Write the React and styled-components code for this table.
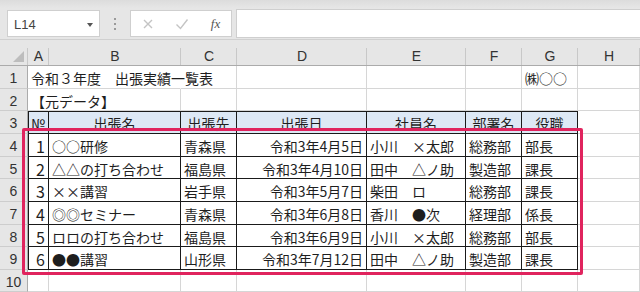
import React from 'react';
import styled, { createGlobalStyle } from 'styled-components';

const GlobalStyle = createGlobalStyle`
  html, body {
    margin: 0;
    padding: 0;
    background: #fff;
  }
  body {
    font-family: "Noto Sans CJK JP", "Noto Sans", sans-serif;
    overflow: hidden;
  }
`;

const COLS = [28, 21, 132, 56, 130, 99, 56, 56, 62];
const ROW_HEIGHTS = [23, 22, 23, 23, 22, 23, 23, 22, 23, 22];
const GRID = '#d6d6d6';
const LINE = '#1a1a1a';

const Window = styled.div`
  width: 640px;
  height: 292px;
  overflow: hidden;
  background: #fff;
`;

const Toolbar = styled.div`
  display: flex;
  align-items: center;
  height: 40px;
  padding: 10px 0 2px 7px;
  box-sizing: border-box;
  background: linear-gradient(#dcdcdc, #e6e6e6 8px, #e6e6e6);
  border-bottom: 1px solid #d0d0d0;
`;

const NameBox = styled.div`
  display: flex;
  align-items: center;
  justify-content: space-between;
  width: 93px;
  height: 27px;
  box-sizing: border-box;
  padding: 2px 6px 0 6px;
  background: #fff;
  border: 1px solid #cfcfcf;
  font-family: "Liberation Sans", sans-serif;
  font-size: 13px;
  color: #444;
`;

const Caret = styled.span`
  width: 0;
  height: 0;
  border-left: 3px solid transparent;
  border-right: 3px solid transparent;
  border-top: 4px solid #555;
`;

const Grip = styled.div`
  width: 30px;
  display: flex;
  flex-direction: column;
  align-items: center;
  gap: 3px;

  span {
    width: 2px;
    height: 2px;
    background: #9a9a9a;
  }
`;

const FuncBox = styled.div`
  display: flex;
  align-items: center;
  justify-content: space-around;
  width: 102px;
  height: 27px;
  box-sizing: border-box;
  background: #fff;
  border: 1px solid #cfcfcf;
  color: #c4c4c4;
`;

const Fx = styled.span`
  font-family: "Liberation Serif", serif;
  font-style: italic;
  font-size: 13px;
  color: #555;
`;

const FormulaInput = styled.div`
  flex: 1;
  height: 27px;
  margin-left: 4px;
  background: #fff;
  border: 1px solid #cfcfcf;
  border-right: none;
`;

const Sheet = styled.div`
  position: relative;
  display: grid;
  grid-template-columns: ${COLS.map(c => `${c}px`).join(' ')};
  grid-template-rows: 26px ${ROW_HEIGHTS.map(h => `${h}px`).join(' ')};
`;

const ColHead = styled.div`
  position: relative;
  background: #e6e6e6;
  border-bottom: 1px solid #ababab;
  display: flex;
  align-items: flex-end;
  justify-content: center;
  padding-bottom: 1px;
  font-family: "Liberation Sans", sans-serif;
  font-size: 14px;
  color: #333;

  &::after {
    content: '';
    position: absolute;
    right: 0;
    top: 8px;
    bottom: 0;
    width: 1px;
    background: #c8c8c8;
  }
`;

const Corner = styled(ColHead)`
  &::before {
    content: '';
    position: absolute;
    right: 4px;
    bottom: 3px;
    width: 0;
    height: 0;
    border-left: 11px solid transparent;
    border-bottom: 11px solid #bdbdbd;
  }
`;

const RowHead = styled.div`
  background: #e6e6e6;
  border-right: 1px solid #ababab;
  border-bottom: 1px solid #cdcdcd;
  display: flex;
  align-items: center;
  justify-content: center;
  padding-top: 2px;
  font-family: "Liberation Sans", sans-serif;
  font-size: 14px;
  color: #333;
  box-sizing: border-box;
`;

const shadows = p => {
  const list = [];
  if (p.$left) list.push(`inset 1px 0 0 ${LINE}`);
  if (p.$top) list.push(`inset 0 1px 0 ${LINE}`);
  return list.length ? list.join(', ') : 'none';
};

const Cell = styled.div`
  box-sizing: border-box;
  display: flex;
  align-items: center;
  justify-content: ${p => (p.$align === 'right' ? 'flex-end' : p.$align === 'center' ? 'center' : 'flex-start')};
  padding: 2px 3px 0;
  overflow: visible;
  white-space: pre;
  font-size: 14px;
  color: #1e1e1e;
  background: ${p => (p.$fill ? '#dde8f5' : '#fff')};
  border-right: 1px solid ${p => (p.$boxed ? LINE : p.$hideRight ? 'transparent' : GRID)};
  border-bottom: 1px solid ${p => (p.$boxed ? LINE : GRID)};
  box-shadow: ${shadows};
  position: relative;
  z-index: ${p => (p.$spill ? 1 : 0)};
`;

const Num = styled.span`
  font-size: 16px;
  line-height: 1;
`;

const Highlight = styled.div`
  position: absolute;
  left: 22px;
  top: 88px;
  width: 561px;
  height: 147px;
  box-sizing: border-box;
  border: 3px solid #e0245e;
  border-radius: 2px;
  pointer-events: none;
  z-index: 2;
`;

const letters = ['A', 'B', 'C', 'D', 'E', 'F', 'G', 'H'];

const records = [
  ['1', '○○研修', '青森県', '令和3年4月5日', '小川　×太郎', '総務部', '部長'],
  ['2', '△△の打ち合わせ', '福島県', '令和3年4月10日', '田中　△ノ助', '製造部', '課長'],
  ['3', '××講習', '岩手県', '令和3年5月7日', '柴田　ロ', '総務部', '課長'],
  ['4', '◎◎セミナー', '青森県', '令和3年6月8日', '香川　●次', '経理部', '係長'],
  ['5', 'ロロの打ち合わせ', '福島県', '令和3年6月9日', '小川　×太郎', '総務部', '部長'],
  ['6', '●●講習', '山形県', '令和3年7月12日', '田中　△ノ助', '製造部', '課長'],
];

const header = ['№', '出張名', '出張先', '出張日', '社員名', '部署名', '役職'];

function Row({ n, children }) {
  return (
    <>
      <RowHead>{n}</RowHead>
      {children}
    </>
  );
}

export default function App() {
  return (
    <Window>
      <GlobalStyle />
      <Toolbar>
        <NameBox>
          L14
          <Caret />
        </NameBox>
        <Grip>
          <span />
          <span />
          <span />
        </Grip>
        <FuncBox>
          <svg width="12" height="12" viewBox="0 0 12 12">
            <path d="M2 2l8 8M10 2l-8 8" stroke="currentColor" strokeWidth="1.4" fill="none" />
          </svg>
          <svg width="14" height="12" viewBox="0 0 14 12">
            <path d="M1.5 6.5l4 4 7-9" stroke="currentColor" strokeWidth="1.4" fill="none" />
          </svg>
          <Fx>fx</Fx>
        </FuncBox>
        <FormulaInput />
      </Toolbar>

      <Sheet>
        <Corner />
        {letters.map(l => (
          <ColHead key={l}>{l}</ColHead>
        ))}

        <Row n="1">
          <Cell $hideRight $spill>令和３年度　出張実績一覧表</Cell>
          <Cell $hideRight />
          <Cell />
          <Cell />
          <Cell />
          <Cell />
          <Cell>㈱○○</Cell>
          <Cell />
        </Row>

        <Row n="2">
          <Cell $hideRight $spill>【元データ】</Cell>
          <Cell />
          <Cell />
          <Cell />
          <Cell />
          <Cell />
          <Cell />
          <Cell />
        </Row>

        <Row n="3">
          {header.map((h, i) => (
            <Cell key={h} $fill $boxed $top $left={i === 0} $align="center">
              {h}
            </Cell>
          ))}
          <Cell />
        </Row>

        {records.map((r, ri) => (
          <Row key={r[0]} n={String(ri + 4)}>
            <Cell $boxed $left $align="right">
              <Num>{r[0]}</Num>
            </Cell>
            <Cell $boxed>{r[1]}</Cell>
            <Cell $boxed>{r[2]}</Cell>
            <Cell $boxed $align="right">{r[3]}</Cell>
            <Cell $boxed>{r[4]}</Cell>
            <Cell $boxed>{r[5]}</Cell>
            <Cell $boxed>{r[6]}</Cell>
            <Cell />
          </Row>
        ))}

        <Row n="10">
          {letters.map(l => (
            <Cell key={l} />
          ))}
        </Row>

        <Highlight />
      </Sheet>
    </Window>
  );
}
